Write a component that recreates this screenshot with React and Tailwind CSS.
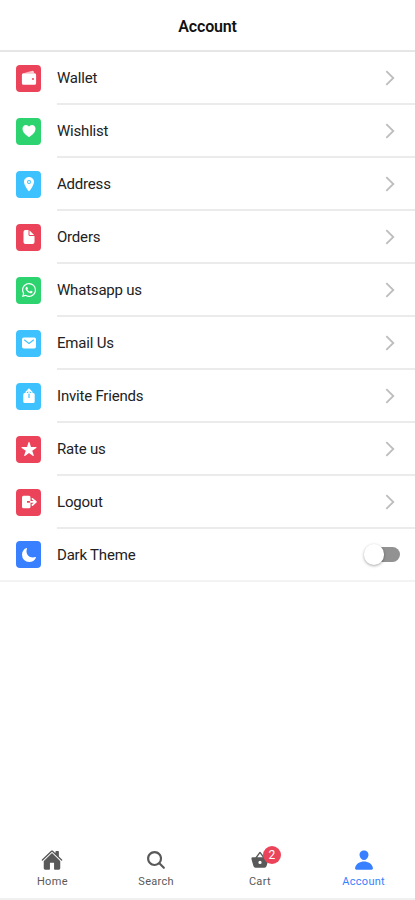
import React, { useState } from 'react';
import {
  IoBasket,
  IoDocument,
  IoHeart,
  IoHome,
  IoLocation,
  IoLogoWhatsapp,
  IoMail,
  IoMoon,
  IoPerson,
  IoSearch,
  IoStar,
} from 'react-icons/io5';

const WalletIcon = ({ className }) => (
  <svg viewBox="0 0 16 16" className={className} fill="currentColor">
    <path d="M3.4 2.7 11 .9a1.6 1.6 0 0 1 2 1.5v.5z" opacity="0.75" />
    <path
      fillRule="evenodd"
      d="M2.4 3.2h11.2A1.5 1.5 0 0 1 15.1 4.7v8.5a1.6 1.6 0 0 1-1.6 1.6H2.5a1.6 1.6 0 0 1-1.6-1.6V4.7a1.5 1.5 0 0 1 1.5-1.5zM12 8a1 1 0 1 0 0 2A1 1 0 0 0 12 8z"
    />
  </svg>
);

const ShareIcon = ({ className }) => (
  <svg viewBox="0 0 16 16" className={className} fill="none" stroke="currentColor">
    <path
      d="M3.8 5h3.6v5h1.2V5h3.6a1.5 1.5 0 0 1 1.5 1.5v7.1a1.5 1.5 0 0 1-1.5 1.5H3.8a1.5 1.5 0 0 1-1.5-1.5V6.5A1.5 1.5 0 0 1 3.8 5z"
      fill="currentColor"
      stroke="none"
    />
    <path d="M8 5.2V1.2M5.1 4.2 8 1.2l2.9 3" strokeWidth="1.5" strokeLinecap="round" strokeLinejoin="round" />
  </svg>
);

const LogoutIcon = ({ className }) => (
  <svg viewBox="0 0 16 16" className={className} fill="none" stroke="currentColor">
    <path
      d="M2.5 1.8H8a1.5 1.5 0 0 1 1.5 1.5v3.8H6v1.6h3.5v4a1.5 1.5 0 0 1-1.5 1.5H2.5A1.5 1.5 0 0 1 1 12.7V3.3a1.5 1.5 0 0 1 1.5-1.5z"
      fill="currentColor"
      stroke="none"
    />
    <path d="M9.6 7.9h5M11.4 4.8 14.9 7.9l-3.5 3.1" strokeWidth="1.7" strokeLinecap="round" strokeLinejoin="round" />
  </svg>
);

const ChevronIcon = () => (
  <svg viewBox="0 0 10 16" className="w-2.5 h-4 text-[#bdbdbd]" fill="none" stroke="currentColor" strokeWidth="1.8">
    <path d="M1.3 1.2 8.3 8l-7 6.8" />
  </svg>
);

const menuItems = [
  { label: 'Wallet', icon: WalletIcon, color: 'bg-[#eb445a]' },
  { label: 'Wishlist', icon: IoHeart, color: 'bg-[#2dd36f]' },
  { label: 'Address', icon: IoLocation, color: 'bg-[#3dc2ff]' },
  { label: 'Orders', icon: IoDocument, color: 'bg-[#eb445a]' },
  { label: 'Whatsapp us', icon: IoLogoWhatsapp, color: 'bg-[#2dd36f]' },
  { label: 'Email Us', icon: IoMail, color: 'bg-[#3dc2ff]' },
  { label: 'Invite Friends', icon: ShareIcon, color: 'bg-[#3dc2ff]' },
  { label: 'Rate us', icon: IoStar, color: 'bg-[#eb445a]' },
  { label: 'Logout', icon: LogoutIcon, color: 'bg-[#eb445a]' },
];

const tabs = [
  { label: 'Home', icon: IoHome },
  { label: 'Search', icon: IoSearch },
  { label: 'Cart', icon: IoBasket, badge: 2 },
  { label: 'Account', icon: IoPerson },
];

const MenuRow = ({ label, icon: Icon, color, last, children }) => (
  <li className={`flex h-[53px] pl-4 ${last ? 'border-b-2 border-[#f3f3f3]' : ''}`}>
    <div className={`flex items-center w-[41px] shrink-0 ${last ? '' : 'pb-px'}`}>
      <span className={`flex items-center justify-center w-[25px] h-[27px] rounded-[4px] text-white ${color}`}>
        <Icon className="w-4 h-4" />
      </span>
    </div>
    <div className={`flex flex-1 items-center justify-between ${last ? 'pr-[15px]' : 'pr-5 border-b-2 border-[#ebebeb]'}`}>
      <span className="pt-[2px] text-[15px] tracking-[-0.2px] text-[#222]">{label}</span>
      {children}
    </div>
  </li>
);

const App = () => {
  const [dark, setDark] = useState(false);
  const [activeTab, setActiveTab] = useState('Account');

  return (
    <div className="flex flex-col h-[900px] w-full bg-white font-['Roboto',sans-serif]">
      <header className="flex items-center justify-center h-[52px] shrink-0 pt-1 border-b-2 border-[#e6e6e6]">
        <h1 className="text-base font-semibold tracking-[-0.2px] text-[#111]">Account</h1>
      </header>

      <ul className="flex-1">
        {menuItems.map((item) => (
          <MenuRow key={item.label} {...item}>
            <ChevronIcon />
          </MenuRow>
        ))}
        <MenuRow label="Dark Theme" icon={IoMoon} color="bg-[#3880ff]" last>
          <button
            role="switch"
            aria-checked={dark}
            aria-label="Dark Theme"
            onClick={() => setDark(!dark)}
            className={`relative w-[34px] h-[15px] rounded-full ${dark ? 'bg-[#9bc0ff]' : 'bg-[#929292]'}`}
          >
            <span
              className={`absolute -top-[3px] w-5 h-[21px] rounded-full bg-white shadow-[0_1px_3px_rgba(0,0,0,0.35)] ${
                dark ? 'right-0' : '-left-[2px]'
              }`}
            />
          </button>
        </MenuRow>
      </ul>

      {/* Bottom tabs */}
      <nav className="flex h-[60px] shrink-0 border-b-2 border-[#f0f0f0]">
        {tabs.map(({ label, icon: Icon, badge }) => (
          <button
            key={label}
            onClick={() => setActiveTab(label)}
            className={`flex flex-1 flex-col items-center pt-2 pl-px ${activeTab === label ? 'text-[#3880ff]' : 'text-[#595959]'}`}
          >
            <span className="relative">
              <Icon className="w-[22px] h-6" />
              {badge && (
                <span className="absolute -top-[2px] left-[14px] flex items-center justify-center w-[18px] h-[18px] rounded-full bg-[#eb445a] text-xs text-white">
                  {badge}
                </span>
              )}
            </span>
            <span className="mt-[3px] text-[11px] leading-[14px] tracking-[0.3px]">{label}</span>
          </button>
        ))}
      </nav>
    </div>
  );
};

export default App;
